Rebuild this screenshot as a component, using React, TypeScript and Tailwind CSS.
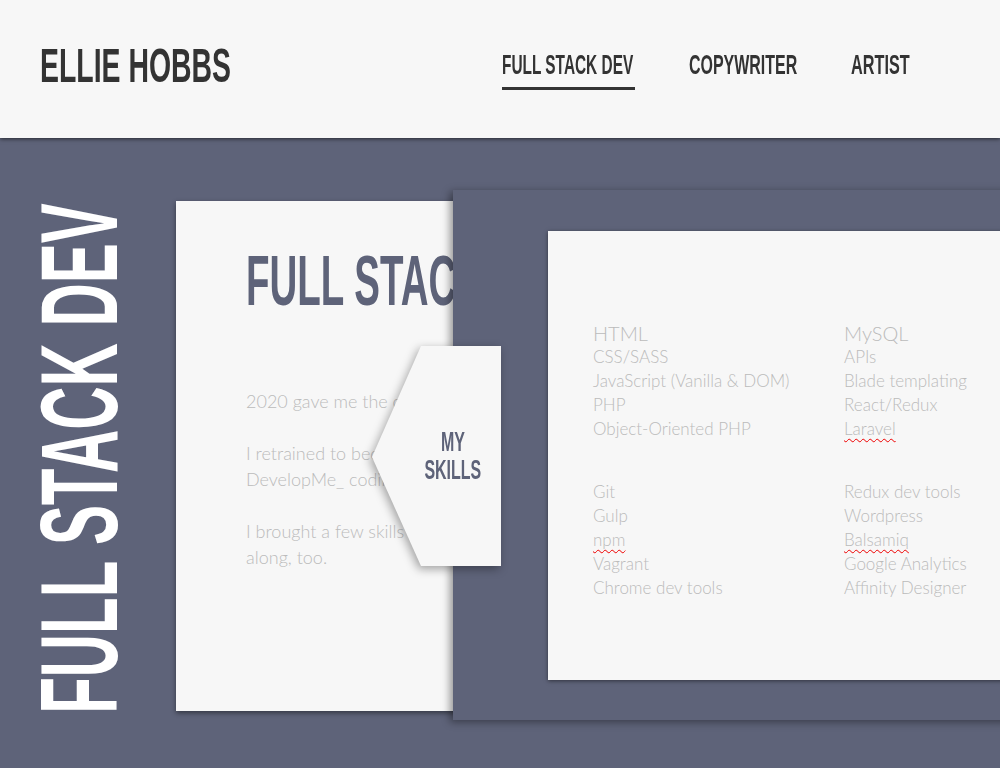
const display = "font-['Liberation_Sans',Arial,sans-serif] font-bold";
const light = "font-['Lato','Open_Sans',sans-serif] font-light";

const skillsLeft = [
  ['HTML', 'CSS/SASS', 'JavaScript (Vanilla & DOM)', 'PHP', 'Object-Oriented PHP'],
  ['Git', 'Gulp', 'npm', 'Vagrant', 'Chrome dev tools'],
];

const skillsRight = [
  ['MySQL', 'APIs', 'Blade templating', 'React/Redux', 'Laravel'],
  ['Redux dev tools', 'Wordpress', 'Balsamiq', 'Google Analytics', 'Affinity Designer'],
];

// words the spellchecker flags in the original
const flagged = ['npm', 'Laravel', 'Balsamiq'];

function SkillColumn({ groups }: { groups: string[][] }) {
  return (
    <div className="flex flex-col gap-[39px]">
      {groups.map((group, g) => (
        <ul key={g} className="flex flex-col">
          {group.map((skill, i) => (
            <li
              key={skill}
              className={`h-[24px] leading-[24px] whitespace-nowrap ${i === 0 && g === 0 ? 'text-[20px]' : 'text-[17px]'}`}
            >
              {flagged.includes(skill) ? (
                <span className="underline decoration-wavy decoration-[#e00] decoration-1 underline-offset-[3px]">{skill}</span>
              ) : (
                skill
              )}
            </li>
          ))}
        </ul>
      ))}
    </div>
  );
}

export default function App() {
  return (
    <div className="w-[1000px] h-[768px] overflow-hidden bg-[#5e6379]">
      <header className="relative z-30 h-[138px] bg-[#f7f7f7] shadow-[0_1px_4px_rgba(0,0,0,0.6)] flex items-start justify-between pl-10 pr-[91px]">
        <h1 className={`${display} mt-[41px] text-[49px] leading-none text-[#333] w-[191px] whitespace-nowrap`}>
          <span className="inline-block origin-left scale-x-[0.58]">ELLIE HOBBS</span>
        </h1>
        <nav className={`${display} mt-[51px] flex gap-[54px] text-[28px] leading-none text-[#333]`}>
          <a className="flex flex-col w-[133px] whitespace-nowrap">
            <span className="inline-block origin-left scale-x-[0.55]">FULL STACK DEV</span>
            <span className="mt-[8px] h-[3px] w-[133px] bg-[#333]" />
          </a>
          <a className="w-[108px] whitespace-nowrap">
            <span className="inline-block origin-left scale-x-[0.57]">COPYWRITER</span>
          </a>
          <a className="w-[58px] whitespace-nowrap">
            <span className="inline-block origin-left scale-x-[0.58]">ARTIST</span>
          </a>
        </nav>
      </header>

      <main className="relative h-[630px] bg-[#5e6379]">
        <div className="flex items-start pl-10 pt-[52px]">
          <div className="mt-[15px] w-[78px] h-[507px] flex items-center justify-center shrink-0">
            <span className={`${display} text-[109px] leading-none text-white whitespace-nowrap -rotate-90 scale-x-[0.55]`}>
              FULL STACK DEV
            </span>
          </div>

          <section className="relative z-0 ml-[58px] mt-[11px] w-[320px] h-[510px] shrink-0 overflow-hidden bg-[#f7f7f7] shadow-[0_2px_5px_rgba(0,0,0,0.45)] pl-[70px] pt-[45px]">
            <h2 className={`${display} text-[70px] leading-none text-[#5e6379] whitespace-nowrap`}>
              <span className="inline-block origin-left scale-x-[0.55]">FULL STACK DEV</span>
            </h2>
            <div className={`${light} mt-[72px] text-[18px] leading-[26px] text-[#bbbbbb] whitespace-nowrap flex flex-col gap-[26px]`}>
              <p>2020 gave me the chance to change direction.</p>
              <p>
                I retrained to become a developer at
                <br />
                DevelopMe_ coding bootcamp.
              </p>
              <p>
                I brought a few skills from my old job
                <br />
                along, too.
              </p>
            </div>
          </section>

          <section className="relative z-10 -ml-[43px] w-[600px] h-[530px] shrink-0 bg-[#5e6379] shadow-[-3px_2px_8px_rgba(0,0,0,0.4)] pt-[41px] pl-[95px]">
            <div className={`${light} w-[500px] h-[449px] bg-[#f7f7f7] shadow-[0_1px_4px_rgba(0,0,0,0.5)] pl-[45px] pt-[90px] grid grid-cols-[251px_1fr] text-[#bbbbbb]`}>
              <SkillColumn groups={skillsLeft} />
              <SkillColumn groups={skillsRight} />
            </div>
          </section>
        </div>

        <div className="absolute left-[372px] top-[208px] z-20 w-[129px] h-[220px] drop-shadow-[-2px_3px_5px_rgba(0,0,0,0.35)]">
          <div className="w-full h-full bg-[#f7f7f7] [clip-path:polygon(49px_0,100%_0,100%_100%,49px_100%,0_111px)] flex items-center justify-center pl-[33px]">
            <div className={`${display} text-[28px] leading-[28px] text-[#5e6379] flex flex-col items-center`}>
              <div className="w-[96px] flex justify-center whitespace-nowrap">
                <span className="inline-block scale-x-[0.57]">MY</span>
              </div>
              <div className="w-[96px] flex justify-center whitespace-nowrap">
                <span className="inline-block scale-x-[0.57]">SKILLS</span>
              </div>
            </div>
          </div>
        </div>
      </main>
    </div>
  );
}
